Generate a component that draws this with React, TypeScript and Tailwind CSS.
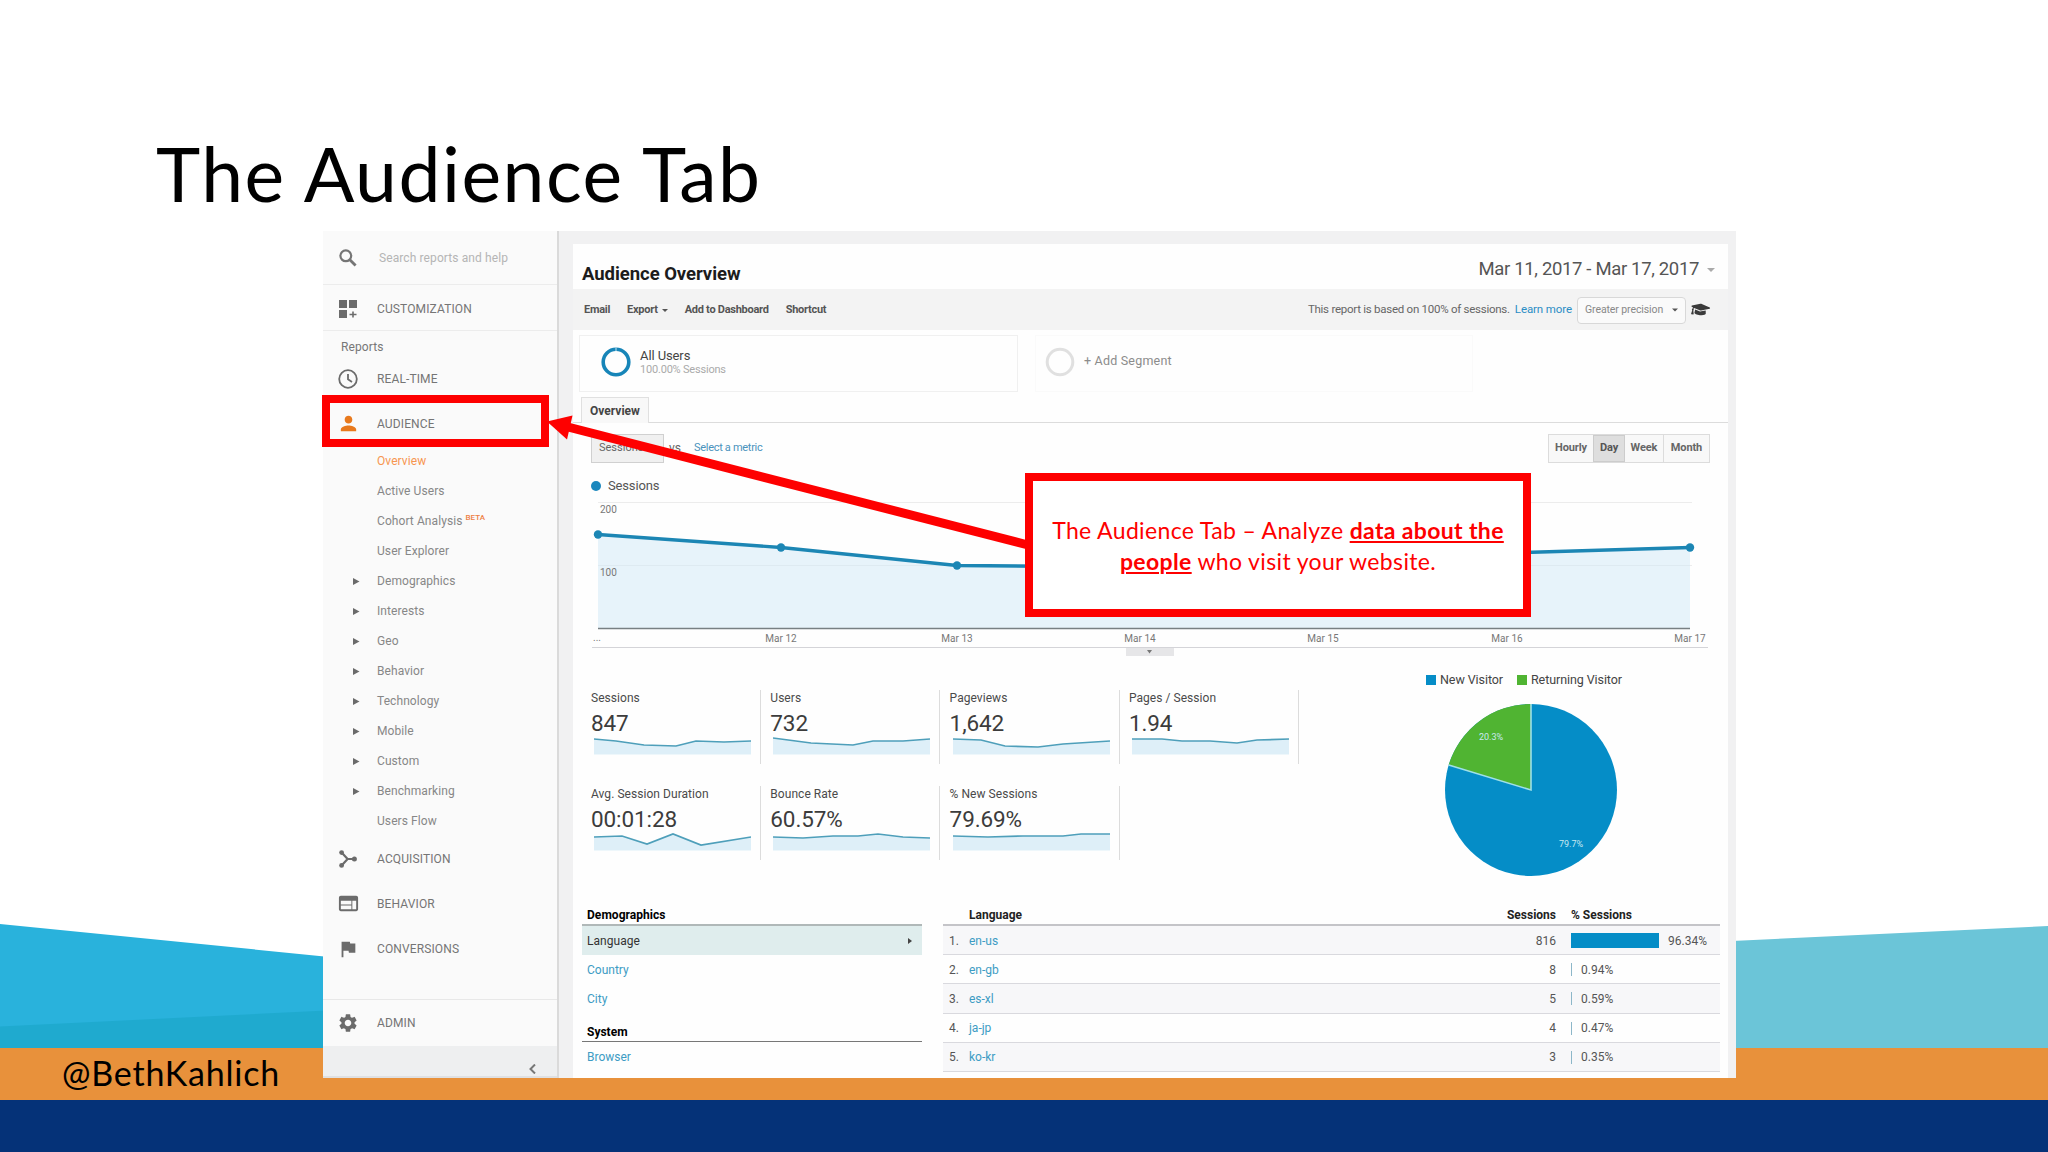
import type { ReactNode } from "react";
import clsx from "clsx";
import { FaGraduationCap } from "react-icons/fa";
import { MdFlag, MdPerson, MdSettings, MdWeb } from "react-icons/md";

const reportItems = [
  { label: "Overview", active: true },
  { label: "Active Users" },
  { label: "Cohort Analysis", beta: true },
  { label: "User Explorer" },
  { label: "Demographics", nested: true },
  { label: "Interests", nested: true },
  { label: "Geo", nested: true },
  { label: "Behavior", nested: true },
  { label: "Technology", nested: true },
  { label: "Mobile", nested: true },
  { label: "Custom", nested: true },
  { label: "Benchmarking", nested: true },
  { label: "Users Flow" },
];

const metrics = [
  { label: "Sessions", value: "847", points: "0,3 22,5 50,9 82,10 102,5 130,6 157,5" },
  { label: "Users", value: "732", points: "0,2 38,7 80,9 100,5 130,5 157,3" },
  { label: "Pageviews", value: "1,642", points: "0,3 28,4 52,10 85,11 110,8 157,5" },
  { label: "Pages / Session", value: "1.94", points: "0,3 30,3 50,5 78,5 105,7 125,4 157,3" },
  { label: "Avg. Session Duration", value: "00:01:28", points: "0,5 28,4 53,12 79,2 107,13 157,5" },
  { label: "Bounce Rate", value: "60.57%", points: "0,5 30,6 60,4 85,4 105,2 130,5 157,6" },
  { label: "% New Sessions", value: "79.69%", points: "0,4 35,5 70,4 110,4 128,2 157,2" },
];

const languages = [
  { code: "en-us", sessions: 816, percent: "96.34%" },
  { code: "en-gb", sessions: 8, percent: "0.94%" },
  { code: "es-xl", sessions: 5, percent: "0.59%" },
  { code: "ja-jp", sessions: 4, percent: "0.47%" },
  { code: "ko-kr", sessions: 3, percent: "0.35%" },
];

const dayLabels = [
  { x: 190, label: "Mar 12" },
  { x: 366, label: "Mar 13" },
  { x: 549, label: "Mar 14" },
  { x: 732, label: "Mar 15" },
  { x: 916, label: "Mar 16" },
  { x: 1099, label: "Mar 17" },
];

const Caret = ({ className }: { className?: string }) => (
  <svg className={clsx("h-1 w-2", className)} fill="currentColor" viewBox="0 0 8 4">
    <path d="M0 0h8L4 4z" />
  </svg>
);

const SearchIcon = () => (
  <svg className="h-[18px] w-[18px]" fill="none" stroke="currentColor" viewBox="0 0 18 18">
    <circle cx="6.8" cy="6.8" r="5.4" strokeWidth="2.2" />
    <path d="M10.800 10.800 16.600 16.600" strokeWidth="2.800" />
  </svg>
);

const CustomizationIcon = () => (
  <svg className="h-[18px] w-[18px]" fill="currentColor" viewBox="0 0 18 18">
    <path d="M0 0h8v8H0zM10 0h8v8h-8zM0 10h8v8H0zM13.200 11.500h1.600v2.200h2.700v1.600h-2.700v2.200h-1.600v-2.200h-2.700v-1.600h2.700z" />
  </svg>
);

const AcquisitionIcon = () => (
  <svg className="h-[18px] w-[18px]" fill="currentColor" viewBox="0 0 18 18">
    <circle cx="2.6" cy="2.6" r="2.4" />
    <circle cx="2.6" cy="15.4" r="2.4" />
    <circle cx="15.4" cy="9" r="2.5" />
    <path
      d="M2.6 2.6 8.6 9l-6 6.4M8.6 9h7"
      fill="none"
      stroke="currentColor"
      strokeWidth="2.2"
    />
  </svg>
);

const SideRow = ({ icon, children }: { icon: ReactNode; children: ReactNode }) => (
  <div className="flex h-[45px] shrink-0 items-center text-xs tracking-[0.12px] text-[#757575]">
    <span className="flex w-[54px] justify-center pr-1 text-[#6b6b6b]">{icon}</span>
    {children}
  </div>
);

const Sidebar = () => (
  <aside className="flex h-full w-[236px] shrink-0 flex-col border-r-2 border-[#dadada] bg-[#fafafa]">
    <div className="flex h-[54px] shrink-0 items-center border-b border-[#ececec] text-xs tracking-[0.1px] text-[#b5b5b5]">
      <span className="flex w-[56px] justify-center pr-[7px] text-[#757575]">
        <SearchIcon />
      </span>
      Search reports and help
    </div>
    <div className="h-[46px] shrink-0 border-b border-[#ececec] pt-px">
      <SideRow icon={<CustomizationIcon />}>CUSTOMIZATION</SideRow>
    </div>
    <div className="h-[25px] shrink-0 pt-[7px] pl-[18px] text-xs leading-[18px] tracking-[0.1px] text-[#777]">
      Reports
    </div>
    <SideRow
      icon={
        <svg className="h-5 w-5" fill="none" stroke="currentColor" strokeWidth="1.8" viewBox="0 0 20 20">
          <circle cx="10" cy="10" r="8.8" />
          <path d="M10 5v5.3l4 2.6" />
        </svg>
      }
    >
      REAL-TIME
    </SideRow>
    <SideRow icon={<MdPerson className="text-[#e8791d]" size={23} />}>AUDIENCE</SideRow>
    {reportItems.map((item) => (
      <div
        className={clsx(
          "flex h-[30px] shrink-0 items-center text-xs tracking-[0.08px]",
          item.active ? "text-[#f79650]" : "text-[#878787]",
        )}
        key={item.label}
      >
        <span className="w-[54px] pl-[30px]">
          {item.nested ? (
            <svg className="h-[7px] w-[7px] text-[#6a6a6a]" fill="currentColor" viewBox="0 0 7 7">
              <path d="M0 0l6.500 3.500L0 7z" />
            </svg>
          ) : null}
        </span>
        {item.label}
        {item.beta ? (
          <span className="mb-1.5 ml-[3px] text-[8px] font-medium text-[#ee8045]">BETA</span>
        ) : null}
      </div>
    ))}
    <SideRow icon={<AcquisitionIcon />}>ACQUISITION</SideRow>
    <SideRow icon={<MdWeb size={23} />}>BEHAVIOR</SideRow>
    <SideRow icon={<MdFlag size={22} />}>CONVERSIONS</SideRow>
    <div className="mt-[28px] h-[47px] shrink-0 border-t border-[#e8e8e8]">
      <SideRow icon={<MdSettings size={22} />}>ADMIN</SideRow>
    </div>
    <div className="flex grow items-end justify-end border-b-2 border-[#dfe0e2] bg-[#eeeff0] pr-[21px] pb-0.5 text-[#777]">
      <svg className="h-[10px] w-[7px]" fill="none" stroke="currentColor" strokeWidth="2" viewBox="0 0 7 10">
        <path d="M6 0.500L1.500 5L6 9.500" />
      </svg>
    </div>
  </aside>
);

const Toolbar = () => (
  <div className="flex h-[41px] shrink-0 items-center bg-[#f3f3f3] pt-px pl-[11px] text-[11px] text-[#555]">
    <div className="flex items-center gap-[17px] font-bold tracking-[-0.27px]">
      <span>Email</span>
      <span className="flex items-center gap-1">
        Export
        <Caret className="h-[3px] w-[6px]" />
      </span>
      <span>Add to Dashboard</span>
      <span>Shortcut</span>
    </div>
    <div className="ml-auto flex items-center pr-[18px]">
      <span className="text-[11.500px] tracking-[-0.26px] text-[#666]">
        This report is based on 100% of sessions.
      </span>
      <span className="ml-[5px] text-[11.500px] tracking-[-0.1px] text-[#2a8dc5]">Learn more</span>
      <span className="ml-[5px] flex h-[27px] w-[109px] items-center justify-between rounded-sm border border-[#d8d8d8] bg-[#fafafa] px-[7px] text-[10.500px] tracking-[-0.1px] text-[#888]">
        Greater precision
        <Caret className="h-[4px] w-[6px] text-[#555]" />
      </span>
      <FaGraduationCap className="mb-0.5 ml-[5px] rotate-6 text-[#3a3a3a]" size={19} />
    </div>
  </div>
);

const Segments = () => (
  <div className="flex h-[67px] shrink-0 gap-[17px] pt-[5px] pl-[6px] text-[#444]">
    <div className="flex h-[57px] w-[439px] items-center border border-[#f0f0f0] pb-[3px] pl-[21px]">
      <svg className="h-[30px] w-[30px]" fill="none" viewBox="0 0 30 30">
        <circle cx="15" cy="15" r="12.800" stroke="#1785b8" strokeWidth="3.600" />
        <path d="M15 0.500v3.500" stroke="#bfe3f2" strokeWidth="1" />
      </svg>
      <div className="ml-[9px] flex flex-col">
        <span className="text-[13px] leading-[15px] tracking-[-0.1px]">All Users</span>
        <span className="text-[11px] leading-[14px] tracking-[-0.2px] text-[#aaa]">100.00% Sessions</span>
      </div>
    </div>
    <div className="flex h-[57px] w-[438px] items-center border border-[#fafafa] pb-[3px] pl-[9px]">
      <svg className="h-[30px] w-[30px]" fill="none" viewBox="0 0 30 30">
        <circle cx="15" cy="15" r="12.800" stroke="#e0e0e0" strokeWidth="3" />
      </svg>
      <span className="mb-[2px] ml-[9px] text-[12.500px] tracking-[0.2px] text-[#8c8c8c]">+ Add Segment</span>
    </div>
  </div>
);

const SessionsChart = () => (
  <div className="shrink-0 pl-[18px]">
    <div className="flex h-[25px] items-center gap-[7px] text-[13px] tracking-[-0.15px] text-[#555]">
      <span className="h-[10px] w-[10px] rounded-full bg-[#1b87bd]" />
      Sessions
    </div>
    <svg className="h-[162px] w-[1130px]" viewBox="0 0 1130 162">
      <path d="M7 4.500h1094M7 67.500h1094" stroke="#ececec" />
      <path
        d="M7 36.500 190 49.500 366 67.500 549 69 732 61 916 55 1099 49.500V130.500H7z"
        fill="#d4e9f5"
        fillOpacity="0.55"
      />
      <path
        d="M7 36.500 190 49.500 366 67.500 549 69 732 61 916 55 1099 49.500"
        fill="none"
        stroke="#1c86b4"
        strokeWidth="3.400"
      />
      {["7,36.5", "190,49.5", "366,67.5", "1099,49.5"].map((point) => {
        const [cx, cy] = point.split(",");
        return <circle cx={cx} cy={cy} fill="#1c86b4" key={point} r="4.200" />;
      })}
      <path d="M7 130.500h1092" stroke="#787f82" strokeWidth="1.500" />
      <g className="text-[10px]" fill="#777">
        <text x="9" y="15">200</text>
        <text x="9" y="78">100</text>
        <text x="2" y="143">...</text>
        {dayLabels.map(({ x, label }) => (
          <text key={label} textAnchor="middle" x={x} y="144">
            {label}
          </text>
        ))}
      </g>
      <path d="M1 149.500h1116" stroke="#d4d4d8" />
      <path d="M535 150h48v8h-48z" fill="#e6e6e8" />
      <path d="M556 152h5l-2.500 3.500z" fill="#777" />
    </svg>
  </div>
);

const MetricCard = ({ label, value, points }: (typeof metrics)[number]) => (
  <div className="flex h-[74px] w-[170px] flex-col border-r border-[#dcdcdc] text-[#4a4a4a]">
    <span className="pt-px text-[12px] leading-[14px] tracking-[0.05px] whitespace-nowrap">{label}</span>
    <span className="mt-[5px] text-[22.500px] leading-[26px] tracking-[-0.1px] text-[#3c3c3c]">{value}</span>
    <svg className="ml-[3px] h-[20px] w-[157px]" viewBox="0 0 157 20">
      <polygon fill="#deeff8" points={`${points} 157,18.500 0,18.500`} />
      <polyline fill="none" points={points} stroke="#4e9fba" strokeWidth="1.700" />
    </svg>
  </div>
);

const VisitorPie = () => (
  <div className="flex flex-col">
    <div className="flex items-center text-[12.500px] leading-[16px] tracking-[-0.08px] text-[#444]">
      <span className="mr-[4px] h-[10px] w-[10px] bg-[#058dc7]" />
      New Visitor
      <span className="mr-[4px] ml-[14px] h-[10px] w-[10px] bg-[#50b432]" />
      Returning Visitor
    </div>
    <svg className="mt-[15px] ml-[18px] h-[174px] w-[174px]" viewBox="-87 -87 174 174">
      <circle fill="#058dc7" r="86" />
      <path
        d="M0 0V-86A86 86 0 0 0 -82.300 -25z"
        fill="#50b432"
      />
      <path d="M0-86V0L-82.300-25" fill="none" stroke="#9fe0e8" strokeWidth="1.600" />
      <g className="text-[9px]" fill="#c9e9f0" textAnchor="middle">
        <text x="-40" y="-50">20.3%</text>
        <text x="40" y="57">79.7%</text>
      </g>
    </svg>
  </div>
);

const DimensionList = () => (
  <div className="flex w-[340px] flex-col text-[12px] text-[#3d9cc4]">
    <div className="h-[20px] border-b-2 border-[#b0b8b8] pl-[5px] leading-[18px] font-bold tracking-[0.05px] text-black">
      Demographics
    </div>
    <div className="flex h-[29px] items-center justify-between bg-[#dfeded] pr-2.5 pl-[5px] tracking-[0.05px] text-[#333]">
      Language
      <svg className="h-[6px] w-[4px]" fill="#444" viewBox="0 0 4 6">
        <path d="M0 0l4 3-4 3z" />
      </svg>
    </div>
    <div className="h-[29px] pl-[5px] leading-[30px]">Country</div>
    <div className="h-[29px] pl-[5px] leading-[30px]">City</div>
    <div className="h-[29px] border-b border-[#777] pl-[5px] leading-[38px] font-bold text-black">
      System
    </div>
    <div className="h-[29px] pl-[5px] leading-[30px]">Browser</div>
  </div>
);

const LanguageTable = () => (
  <div className="flex w-[777px] flex-col text-[12px] text-[#555]">
    <div className="flex h-[20px] border-b-2 border-[#c4c4c8] leading-[18px] font-bold text-[#222]">
      <span className="w-[26px]" />
      <span className="grow">Language</span>
      <span className="w-[60px] text-right">Sessions</span>
      <span className="w-[164px] pl-[15px]">% Sessions</span>
    </div>
    {languages.map((row, index) => (
      <div
        className={clsx(
          "flex h-[29.200px] items-center border-b border-[#d9d9de] pt-px",
          index % 2 === 0 && "bg-[#f7f7f9]",
        )}
        key={row.code}
      >
        <span className="w-[26px] pl-[6px]">{index + 1}.</span>
        <span className="grow text-[#3d9cc4]">{row.code}</span>
        <span className="w-[60px] text-right">{row.sessions}</span>
        <span className="flex w-[164px] items-center gap-[9px] pl-[15px]">
          <span
            className={index === 0 ? "h-[15px] bg-[#058dc7]" : "h-[13px] bg-[#8db7c9]"}
            style={{ width: Math.max(1, Math.round((row.sessions / 816) * 88)) }}
          />
          {row.percent}
        </span>
      </div>
    ))}
  </div>
);

const Report = () => (
  <main className="mt-[13px] mr-[8px] ml-[14px] flex h-[834px] w-[1155px] shrink-0 flex-col overflow-hidden bg-[#fefefe]">
    <div className="flex h-[45px] shrink-0 items-center justify-between pr-[13px] pl-[9px]">
      <h2 className="pt-[16px] text-[18.500px] font-bold tracking-[-0.05px] text-[#1c1c1c]">Audience Overview</h2>
      <div className="flex items-center gap-[8px] pt-[6px] text-[18.500px] tracking-[-0.34px] text-[#555]">
        Mar 11, 2017 - Mar 17, 2017
        <Caret className="text-[#aaa]" />
      </div>
    </div>
    <Toolbar />
    <Segments />
    <div className="flex h-[26px] shrink-0">
      <span className="w-[8px] border-b border-[#dcdcdc]" />
      <span className="flex w-[68px] items-center justify-center border border-b-0 border-[#e0e0e0] bg-[#f8f8f8] text-[12px] font-bold text-[#444]">
        Overview
      </span>
      <span className="grow border-b border-[#dcdcdc]" />
    </div>
    <div className="flex h-[50px] shrink-0 items-center justify-between pr-[18px] pl-[18px] text-[11px]">
      <div className="flex items-center">
        <span className="flex h-[29px] w-[73px] items-center border border-[#d0d0d0] bg-[#f0f0f0] pl-[7px] text-[#666]">
          Sessions
        </span>
        <span className="ml-[5px] text-[12px] text-[#666]">vs</span>
        <span className="ml-[13px] tracking-[-0.3px] text-[#4a93bd]">Select a metric</span>
      </div>
      <div className="flex h-[29px] border border-[#dcdcdc] bg-[#f8f8f8] text-[11px] font-bold tracking-[-0.1px] text-[#666]">
        <span className="flex w-[44px] items-center justify-center">Hourly</span>
        <span className="flex w-[32px] items-center justify-center border border-[#ccc] bg-[#dedede] text-[#555]">
          Day
        </span>
        <span className="flex w-[38px] items-center justify-center">Week</span>
        <span className="flex w-[46px] items-center justify-center border-l border-[#dcdcdc]">Month</span>
      </div>
    </div>
    <SessionsChart />
    <div className="flex h-[244px] shrink-0 justify-between pl-[18px]">
      <div className="flex w-[720px] flex-wrap content-start gap-x-[9.300px] gap-y-[22px] pt-[30px]">
        {metrics.map((metric) => (
          <MetricCard key={metric.label} {...metric} />
        ))}
      </div>
      <div className="w-[302px] pt-[12px]">
        <VisitorPie />
      </div>
    </div>
    <div className="flex shrink-0 gap-[21px] pt-[2px] pl-[9px]">
      <DimensionList />
      <LanguageTable />
    </div>
  </main>
);

const Backdrop = () => (
  <svg className="absolute inset-0 h-[1152px] w-[2048px]" viewBox="0 0 2048 1152">
    <path d="M0 924 1240 1048H0z" fill="#29b2dc" />
    <path d="M0 1026.500 420 1006V1048H0z" fill="#1faacf" />
    <path d="M1200 966 2048 926v122H1200z" fill="#6bc5d8" />
    <path d="M0 1048h2048v52H0z" fill="#e8913b" />
    <path d="M0 1100h2048v52H0z" fill="#053278" />
  </svg>
);

const Annotations = () => (
  <>
    <svg className="absolute inset-0 h-[1152px] w-[2048px]" viewBox="0 0 2048 1152">
      <path d="M566 426.500 1028 545" stroke="#fe0000" strokeWidth="9" />
      <path d="M547 421.500 572.500 415.500 567 439.500z" fill="#fe0000" />
    </svg>
    <div className="absolute top-[395px] left-[322px] h-[52px] w-[227px] border-8 border-[#fe0000]" />
    <div className="absolute top-[473px] left-[1025px] flex h-[144px] w-[506px] items-center justify-center border-8 border-[#fe0000] bg-white pt-px text-center font-[Lato,sans-serif] text-[23px] leading-[31px] tracking-[0.35px] whitespace-nowrap text-[#fe0000]">
      <p>
        The Audience Tab – Analyze <b className="underline">data about the</b>
        <br />
        <b className="underline">people</b> who visit your website.
      </p>
    </div>
  </>
);

export default function App() {
  return (
    <div className="relative h-[1152px] w-[2048px] overflow-hidden bg-white font-[Roboto,sans-serif]">
      <Backdrop />
      <h1 className="relative h-[231px] pt-[129px] pl-[156px] font-[Lato,sans-serif] text-[75px] leading-[88px] tracking-[1.5px] text-black">
        The Audience Tab
      </h1>
      <section className="relative ml-[323px] flex h-[847px] w-[1413px] bg-[#f1f1f2]">
        <Sidebar />
        <Report />
      </section>
      <Annotations />
      <footer className="absolute top-[1050px] left-[62px] font-[Lato,sans-serif] text-[34px] leading-[46px] tracking-[0.8px] text-black">
        @BethKahlich
      </footer>
    </div>
  );
}
